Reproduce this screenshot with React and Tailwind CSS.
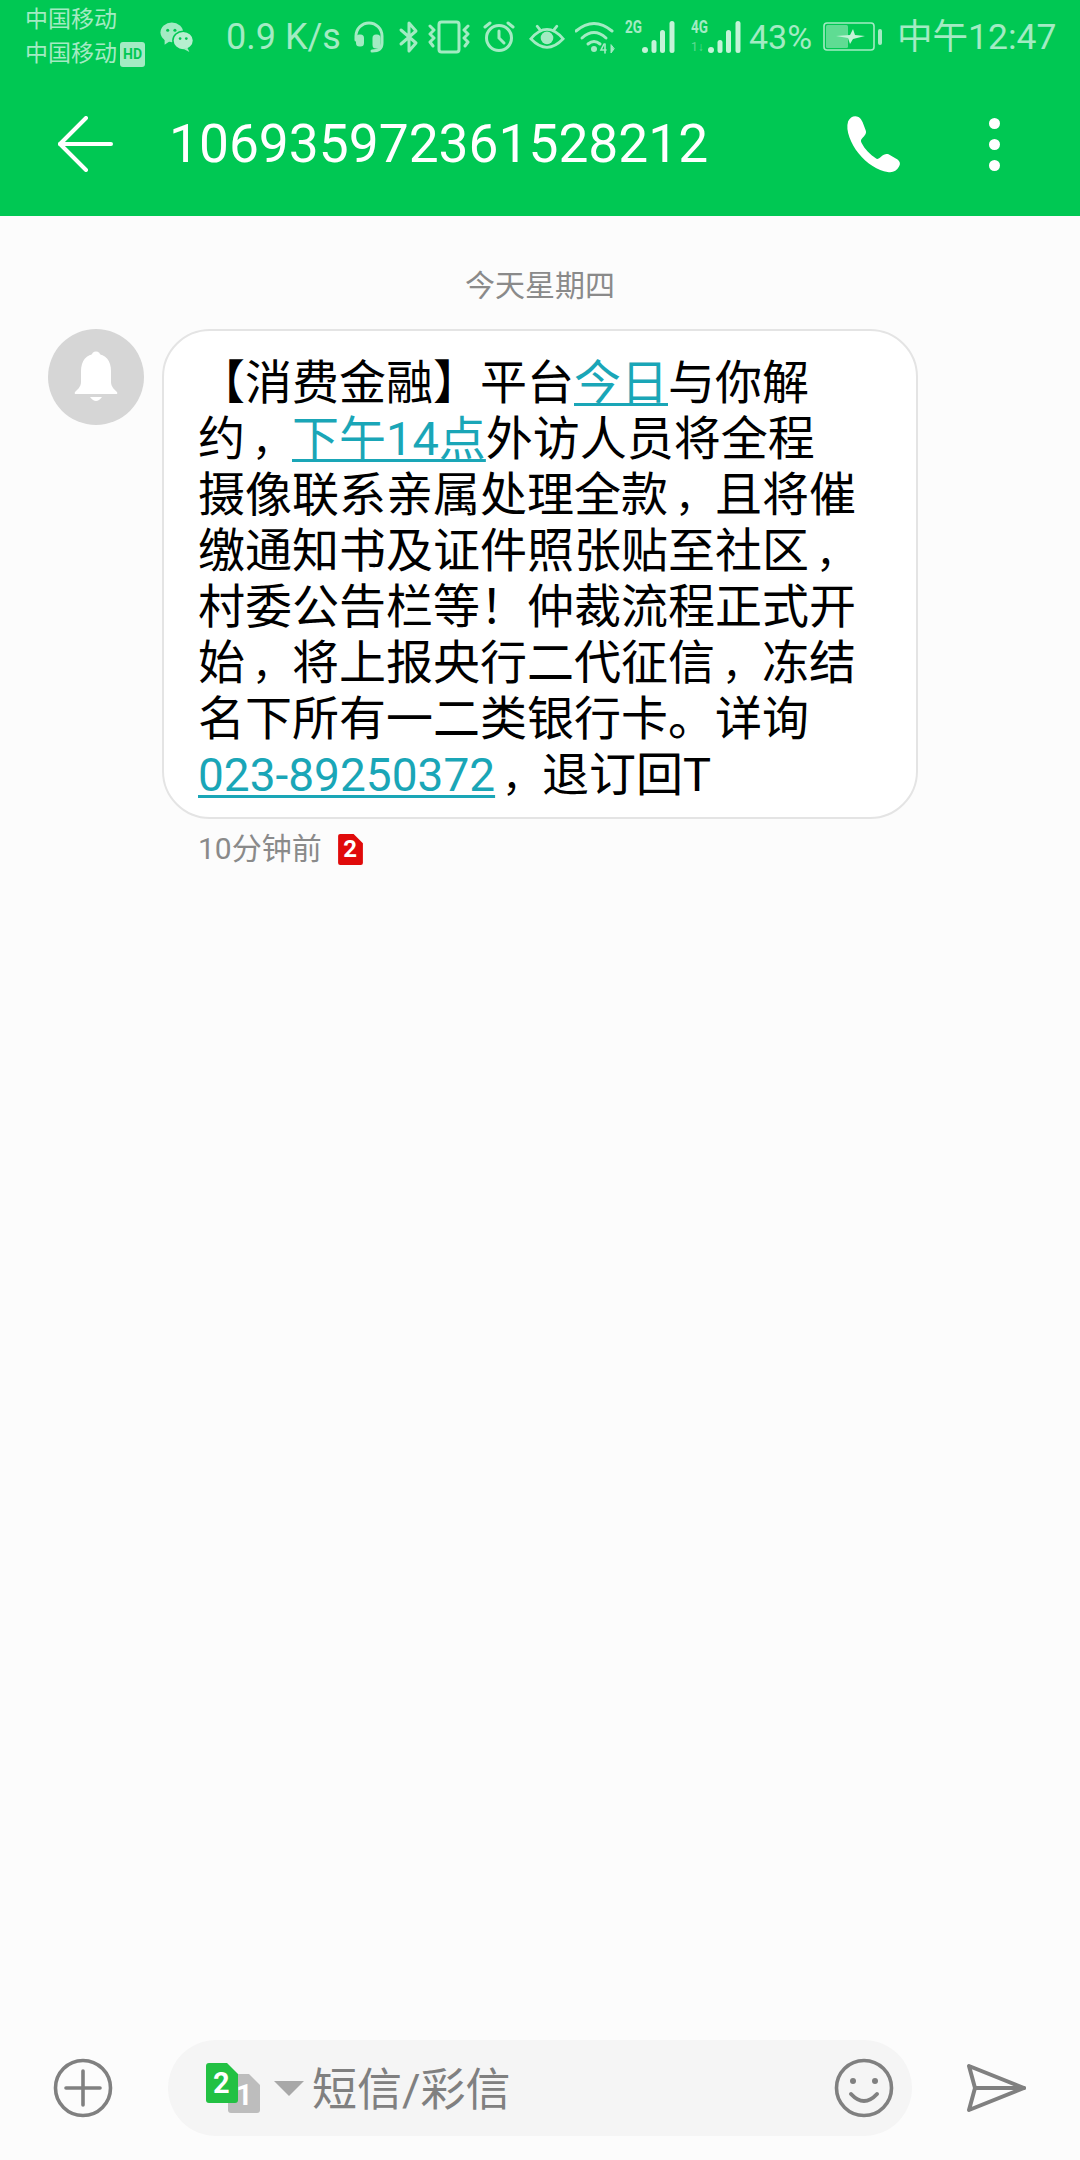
const S = "#a3ebc3";
const G = "#00c853";

function Wechat() {
  return (
    <svg width="36" height="31" viewBox="0 0 34 30" className="shrink-0 ml-[14px]">
      <ellipse cx="12" cy="10" rx="11" ry="9.5" fill={S} />
      <path d="M5 16 L5 22 L11 18Z" fill={S} />
      <ellipse cx="23" cy="18" rx="10" ry="9" fill="#b6efcf" stroke={G} strokeWidth="1.5" />
      <path d="M27 25 L29 29 L23 26Z" fill={S} />
      <circle cx="8" cy="8" r="1.5" fill={G} />
      <circle cx="15" cy="8" r="1.5" fill={G} />
      <circle cx="20" cy="16" r="1.3" fill={G} />
      <circle cx="26" cy="16" r="1.3" fill={G} />
    </svg>
  );
}

function Headphone() {
  return (
    <svg width="32" height="34" viewBox="0 0 32 34" fill="none" stroke={S} strokeWidth="3" strokeLinecap="round" className="shrink-0 ml-[12px]">
      <path d="M3 20 V16 A13 13 0 0 1 29 16 V23 Q29 31 19 31" />
      <rect x="4.5" y="16" width="5" height="9" rx="2" fill={S} />
      <rect x="21" y="16" width="5" height="11" rx="2" fill={S} />
    </svg>
  );
}

function Bluetooth() {
  return (
    <svg width="22" height="34" viewBox="0 0 22 34" fill="none" stroke={S} strokeWidth="3" strokeLinejoin="round" strokeLinecap="round" className="shrink-0 ml-[13px]">
      <path d="M3 10 L18 23 L11 31 V3 L18 11 L3 24" />
    </svg>
  );
}

function Vibrate() {
  return (
    <svg width="42" height="34" viewBox="0 0 42 34" fill="none" stroke={S} strokeWidth="3" strokeLinejoin="round" strokeLinecap="round" className="shrink-0 ml-[8px]">
      <rect x="11" y="2" width="20" height="30" rx="2.5" />
      <path d="M2 6 L6 10 L2 14 L6 18 L2 22 L5 26" />
      <path d="M40 6 L36 10 L40 14 L36 18 L40 22 L37 26" />
    </svg>
  );
}

function Alarm() {
  return (
    <svg width="32" height="34" viewBox="0 0 32 34" fill="none" stroke={S} strokeWidth="3" strokeLinecap="round" className="shrink-0 ml-[13px]">
      <circle cx="16" cy="18" r="12.5" />
      <path d="M16 11 V18 L21 23" />
      <path d="M2 7 L7 3" />
      <path d="M30 7 L25 3" />
    </svg>
  );
}

function Eye() {
  return (
    <svg width="36" height="34" viewBox="0 0 40 34" fill="none" stroke={S} strokeWidth="3" strokeLinecap="round" className="shrink-0 ml-[14px]">
      <path d="M2 19 Q20 -2 38 19 Q20 38 2 19Z" />
      <circle cx="20" cy="18" r="7" fill={S} stroke="none" />
      <path d="M9 5 L13 10" />
      <path d="M31 5 L27 10" />
    </svg>
  );
}

function Wifi() {
  return (
    <svg width="40" height="34" viewBox="0 0 40 34" fill="none" stroke={S} strokeWidth="3" strokeLinecap="round" className="shrink-0 ml-[10px]">
      <path d="M1 11 Q19 -4 37 11" />
      <path d="M7 18 Q19 7 31 18" />
      <path d="M13 24 Q19 19 25 24" />
      <circle cx="19" cy="29" r="3" fill={S} stroke="none" />
      <path d="M29 24 L26 30 H31" strokeWidth="1.6" />
      <path d="M30 24 V33" strokeWidth="1.6" />
      <path d="M36 25 V33 L39 29Z" fill={S} strokeWidth="1" />
    </svg>
  );
}

function Signal({ label, faded, gap }) {
  return (
    <div className={"relative w-[52px] h-[34px] shrink-0 " + gap}>
      <span className="absolute left-0 top-[-2px] text-[18px] leading-[18px] font-bold text-[#a3ebc3] font-['Roboto'] scale-x-75 origin-left">{label}</span>
      {faded && <span className="absolute left-0 bottom-0 text-[12px] leading-[14px] text-[#5fdc93] font-['Roboto']">1↓</span>}
      <svg width="52" height="34" viewBox="0 0 52 34" className="absolute left-0 top-0">
        <circle cx="20" cy="30" r="3" fill="#c4f3d8" />
        <rect x="26.5" y="20" width="5" height="13" rx="2.5" fill="#c4f3d8" />
        <rect x="35" y="10" width="5" height="23" rx="2.5" fill="#c4f3d8" />
        <rect x="44.5" y="1" width="5" height="32" rx="2.5" fill="#c4f3d8" />
      </svg>
    </div>
  );
}

function Battery() {
  return (
    <svg width="60" height="30" viewBox="0 0 60 30" fill="none" className="shrink-0 ml-[10px]">
      <rect x="1" y="1" width="50" height="27" rx="3" stroke={S} strokeWidth="1.6" />
      <rect x="3" y="3" width="22" height="23" rx="1.5" fill="#5fdc93" />
      <path d="M13 14 L27 13 L30 7 L32 13 L42 14 L30 17 L27 22 L25 16Z" fill="#c4f3d8" />
      <rect x="55" y="7" width="4" height="16" rx="2" fill={S} />
    </svg>
  );
}

function StatusBar() {
  return (
    <div className="h-[72px] flex items-center pl-[25px] pt-[2px] text-[#a3ebc3] font-['Roboto','Noto_Sans_CJK_SC',sans-serif]">
      <div className="flex flex-col w-[120px] shrink-0 text-[23px] leading-[34px]">
        <div>中国移动</div>
        <div className="flex items-center gap-[3px] whitespace-nowrap">
          中国移动
          <span className="w-[25px] h-[25px] rounded-[3px] bg-[#a3ebc3] text-[#00c853] text-[14px] leading-[25px] font-bold text-center font-['Roboto']">HD</span>
        </div>
      </div>
      <Wechat />
      <div className="ml-[31px] w-[115px] shrink-0 text-[36px] leading-[40px] whitespace-nowrap">0.9 K/s</div>
      <Headphone />
      <Bluetooth />
      <Vibrate />
      <Alarm />
      <Eye />
      <Wifi />
      <Signal label="2G" gap="ml-[10px]" />
      <Signal label="4G" faded gap="ml-[14px]" />
      <div className="ml-[6px] w-[64px] shrink-0 text-[34px] leading-[40px] whitespace-nowrap">43%</div>
      <Battery />
      <div className="ml-[14px] text-[35.5px] leading-[40px] whitespace-nowrap">中午12:47</div>
    </div>
  );
}

function Toolbar() {
  return (
    <div className="h-[144px] flex items-center pl-[58px] text-white">
      <svg width="56" height="56" viewBox="0 0 56 56" fill="none" stroke="#fff" strokeWidth="4" strokeLinecap="round" strokeLinejoin="round" className="shrink-0">
        <path d="M28 2 L2 28 L28 54" />
        <path d="M2 28 H53" />
      </svg>
      <div className="ml-[55px] w-[676px] shrink-0 text-[53.3px] leading-[64px] font-['Roboto',sans-serif]">106935972361528212</div>
      <svg width="56" height="58" viewBox="0 0 54 56" className="shrink-0">
        <path fill="#fff" d="M3 6 C5 2 9 0 13 2 C15 3 16 5 17 7 L20 15 C21 18 19 20 17 22 C15 24 15 25 16 27 C19 33 24 38 30 42 C31 43 33 42 35 40 C37 38 40 37 42 38 L49 42 C53 44 54 47 52 50 C50 54 46 56 41 55 C32 54 21 47 13 37 C6 28 0 15 3 6Z" />
      </svg>
      <div className="ml-[88px] flex flex-col gap-[10px] shrink-0">
        <div className="w-[11px] h-[11px] rounded-full bg-white" />
        <div className="w-[11px] h-[11px] rounded-full bg-white" />
        <div className="w-[11px] h-[11px] rounded-full bg-white" />
      </div>
    </div>
  );
}

const Link = ({ children, className = "" }) => (
  <span className={"text-[#1aa6b7] underline decoration-[3px] underline-offset-[4px] " + className}>{children}</span>
);

const Comma = () => <span className="inline-block w-[47px] pl-[7px] text-[40px] leading-[40px]">，</span>;

function Message() {
  return (
    <div className="flex items-start pl-[48px] mt-[23px]">
      <div className="w-[96px] h-[96px] rounded-full bg-[#d6d6d6] flex items-center justify-center shrink-0">
        <svg width="44" height="50" viewBox="0 0 44 50" className="mt-[-2px]">
          <circle cx="22" cy="5" r="4.5" fill="#fff" />
          <path fill="#fff" d="M22 3 C12 3 7 10 7 20 V31 C7 36 3 39 1 41 Q0 43 2 43 H42 Q44 43 43 41 C41 39 37 36 37 31 V20 C37 10 32 3 22 3Z" />
          <path fill="#fff" d="M16 46 H28 Q25 50 22 50 Q19 50 16 46Z" />
        </svg>
      </div>
      <div className="ml-[18px] flex flex-col">
        <div className="w-[756px] h-[490px] rounded-[48px] border-2 border-[#e4e4e4] bg-white pl-[34px] pt-[24px] text-[47px] leading-[56px] text-black whitespace-nowrap font-['Roboto','Noto_Sans_CJK_SC',sans-serif]">
          <div>【消费金融】平台<Link>今日</Link>与你解</div>
          <div>约<Comma /><Link>下午14点</Link>外访人员将全程</div>
          <div>摄像联系亲属处理全款<Comma />且将催</div>
          <div>缴通知书及证件照张贴至社区<Comma /></div>
          <div>村委公告栏等！仲裁流程正式开</div>
          <div>始<Comma />将上报央行二代征信<Comma />冻结</div>
          <div>名下所有一二类银行卡。详询</div>
          <div><Link className="text-[46px]">023-89250372</Link><Comma />退订回T</div>
        </div>
        <div className="mt-[10px] pl-[36px] flex items-center text-[30px] leading-[40px] text-[#8a8a8a] font-['Roboto','Noto_Sans_CJK_SC',sans-serif]">
          <span>10分钟前</span>
          <span className="ml-[16px] relative w-[25px] h-[31px]">
            <svg width="25" height="31" viewBox="0 0 24 30" className="absolute inset-0">
              <path fill="#e00a0a" d="M2 0 H15 L24 9 V28 Q24 30 22 30 H2 Q0 30 0 28 V2 Q0 0 2 0Z" />
            </svg>
            <span className="absolute inset-0 text-center text-white text-[24px] leading-[31px] font-bold font-['Roboto']">2</span>
          </span>
        </div>
      </div>
    </div>
  );
}

function InputBar() {
  return (
    <div className="h-[96px] mb-[24px] flex items-center pl-[53px]">
      <svg width="60" height="60" viewBox="0 0 60 60" fill="none" stroke="#808080" strokeWidth="3.6" strokeLinecap="round" className="shrink-0">
        <circle cx="30" cy="30" r="27.5" />
        <path d="M13 30 H47" />
        <path d="M30 13 V47" />
      </svg>
      <div className="ml-[55px] w-[744px] h-[96px] rounded-full bg-[#f5f5f5] flex items-center pl-[38px] shrink-0">
        <div className="relative w-[54px] h-[50px] shrink-0">
          <svg width="32" height="39" viewBox="0 0 32 39" className="absolute left-[22px] top-[11px]">
            <path fill="#bdbdbd" d="M3 0 H21 L32 11 V36 Q32 39 29 39 H3 Q0 39 0 36 V3 Q0 0 3 0Z" />
          </svg>
          <span className="absolute left-[30px] top-[15px] text-white text-[29px] leading-[34px] font-bold font-['Roboto']">1</span>
          <svg width="32" height="40" viewBox="0 0 32 40" className="absolute left-0 top-0">
            <path fill="#22c143" d="M3 0 H21 L32 11 V37 Q32 40 29 40 H3 Q0 40 0 37 V3 Q0 0 3 0Z" />
          </svg>
          <span className="absolute left-[7px] top-[2px] text-white text-[29px] leading-[36px] font-bold font-['Roboto']">2</span>
        </div>
        <div className="ml-[14px] w-0 h-0 border-l-[15px] border-r-[15px] border-t-[15px] border-l-transparent border-r-transparent border-t-[#a8a8a8] shrink-0" />
        <div className="ml-[8px] mt-[6px] text-[45px] leading-[56px] text-[#808080] whitespace-nowrap font-['Roboto','Noto_Sans_CJK_SC',sans-serif]">短信/彩信</div>
        <svg width="60" height="60" viewBox="0 0 60 60" fill="none" stroke="#808080" strokeWidth="3.6" strokeLinecap="round" className="ml-auto mr-[18px] shrink-0">
          <circle cx="30" cy="30" r="27.5" />
          <circle cx="19" cy="23" r="3" fill="#808080" stroke="none" />
          <circle cx="41" cy="23" r="3" fill="#808080" stroke="none" />
          <path d="M17 36 Q30 50 43 36" strokeWidth="4" />
        </svg>
      </div>
      <svg width="60" height="50" viewBox="0 0 60 50" fill="none" stroke="#808080" strokeWidth="4" strokeLinecap="round" strokeLinejoin="round" className="ml-[54px] shrink-0">
        <path d="M3 3 L58 25 L3 47 L9 25Z" />
        <path d="M9 25 H58" />
      </svg>
    </div>
  );
}

export default function App() {
  return (
    <div className="w-[1080px] h-[2160px] flex flex-col bg-[#fcfcfc] overflow-hidden">
      <div className="h-[216px] shrink-0 bg-[#00c853]">
        <StatusBar />
        <Toolbar />
      </div>
      <div className="mt-[50px] text-center text-[30px] leading-[40px] text-[#8a8a8a] font-['Roboto','Noto_Sans_CJK_SC',sans-serif]">今天星期四</div>
      <Message />
      <div className="flex-1" />
      <InputBar />
    </div>
  );
}
